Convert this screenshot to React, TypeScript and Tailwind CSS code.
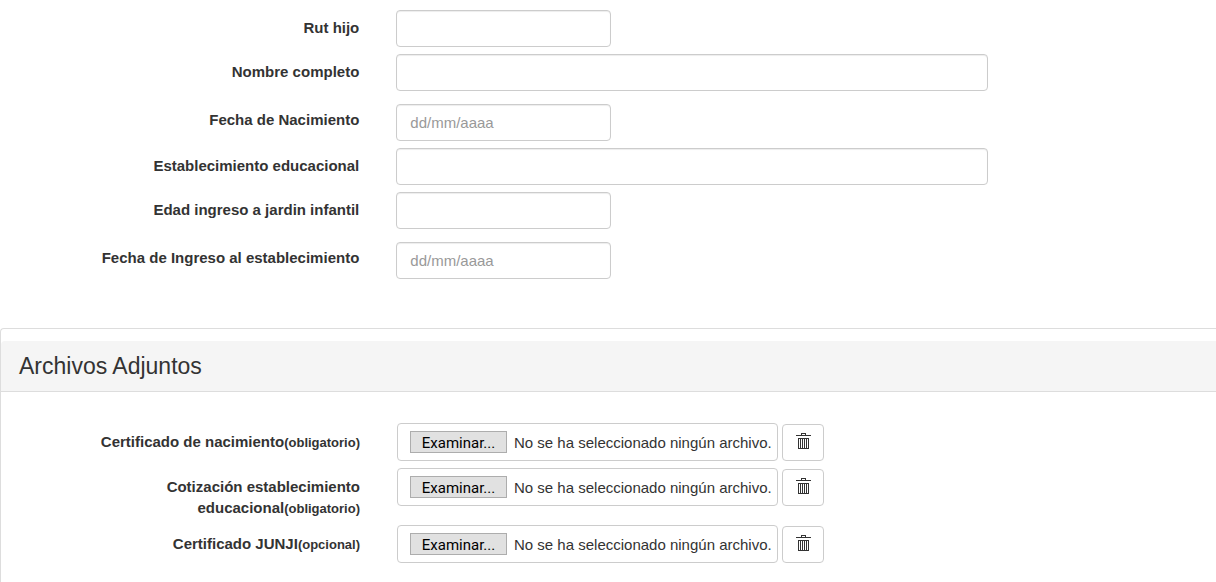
import { useRef, useState } from 'react';

const fields = [
  { id: 'rut', label: 'Rut hijo', wide: false, date: false },
  { id: 'nombre', label: 'Nombre completo', wide: true, date: false },
  { id: 'nacimiento', label: 'Fecha de Nacimiento', wide: false, date: true },
  { id: 'establecimiento', label: 'Establecimiento educacional', wide: true, date: false },
  { id: 'edad', label: 'Edad ingreso a jardin infantil', wide: false, date: false },
  { id: 'ingreso', label: 'Fecha de Ingreso al establecimiento', wide: false, date: true },
];

const attachments = [
  { id: 'cert-nacimiento', label: 'Certificado de nacimiento', note: '(obligatorio)' },
  { id: 'cotizacion', label: 'Cotización establecimiento educacional', note: '(obligatorio)' },
  { id: 'cert-junji', label: 'Certificado JUNJI', note: '(opcional)' },
];

function TrashIcon() {
  return (
    <svg width="15" height="17" viewBox="0 0 15 17" fill="none" stroke="#333333" shapeRendering="crispEdges" aria-hidden="true">
      <path d="M5.5 2V.5h4V2" />
      <path d="M0 2.5h15" />
      <path d="M2.5 5.5h10v10h-10z" />
      <path d="M4.5 6v9M6.5 6v9M8.5 6v9M10.5 6v9" />
    </svg>
  );
}

function FileRow({ id, label, note }: { id: string; label: string; note: string }) {
  const inputRef = useRef<HTMLInputElement>(null);
  const [fileName, setFileName] = useState('');

  const clear = () => {
    if (inputRef.current) inputRef.current.value = '';
    setFileName('');
  };

  return (
    <div className="grid grid-cols-[3fr_7fr] gap-x-[37px] pl-2">
      <div className="flex justify-end pt-2">
        <label htmlFor={id} className="max-w-[260px] text-right font-bold">
          {label}<small className="text-[13px] leading-none">{note}</small>
        </label>
      </div>
      <div className="flex items-start gap-1">
        <div className="flex h-[38px] w-full max-w-[381px] items-center gap-[7px] rounded border border-[#cccccc] pl-3">
          <input
            ref={inputRef}
            id={id}
            type="file"
            className="hidden"
            onChange={(e) => setFileName(e.target.files?.[0]?.name ?? '')}
          />
          <button
            type="button"
            onClick={() => inputRef.current?.click()}
            className="h-[22px] w-[97px] shrink-0 border border-[#adadad] bg-[#e1e1e1] font-[Roboto,sans-serif] leading-[22px] text-black"
          >
            Examinar...
          </button>
          <span className="truncate">{fileName || 'No se ha seleccionado ningún archivo.'}</span>
        </div>
        <button
          type="button"
          aria-label="Eliminar archivo"
          onClick={clear}
          className="mt-px flex h-[37px] w-[42px] shrink-0 items-center justify-center rounded border border-[#cccccc] bg-white pb-0.5 hover:bg-gray-100"
        >
          <TrashIcon />
        </button>
      </div>
    </div>
  );
}

export default function App() {
  return (
    <form className="bg-white font-['Liberation_Sans',Arial,sans-serif] text-[15px] leading-[21px] text-[#333333]">
      <div className="flex flex-col gap-[7px] pt-[10px]">
        {fields.map((field) => (
          <div key={field.id} className={`grid grid-cols-[3fr_7fr] gap-x-[37px] pl-2 ${field.date ? 'pt-1.5' : ''}`}>
            <label htmlFor={field.id} className={`text-right font-bold ${field.date ? 'pt-[5px]' : 'pt-[7px]'}`}>
              {field.label}
            </label>
            <input
              id={field.id}
              type="text"
              placeholder={field.date ? 'dd/mm/aaaa' : undefined}
              className={`h-[37px] w-full rounded border border-[#cccccc] px-[13px] shadow-[inset_0_1px_1px_rgba(0,0,0,0.075)] outline-none placeholder:text-[#999999] focus:border-[#66afe9] ${field.wide ? 'max-w-[592px]' : 'max-w-[215px]'}`}
            />
          </div>
        ))}
      </div>

      <section className="mt-[49px] rounded-tl border-t border-l border-[#dddddd] pt-3">
        <h2 className="rounded-tl border-b border-[#dddddd] bg-[#f5f5f5] px-[18px] py-3 text-[23px] leading-[26px]">
          Archivos Adjuntos
        </h2>
        <div className="flex flex-col gap-[7px] pt-[31px] pb-6">
          {attachments.map((file) => (
            <FileRow key={file.id} {...file} />
          ))}
        </div>
      </section>
    </form>
  );
}
